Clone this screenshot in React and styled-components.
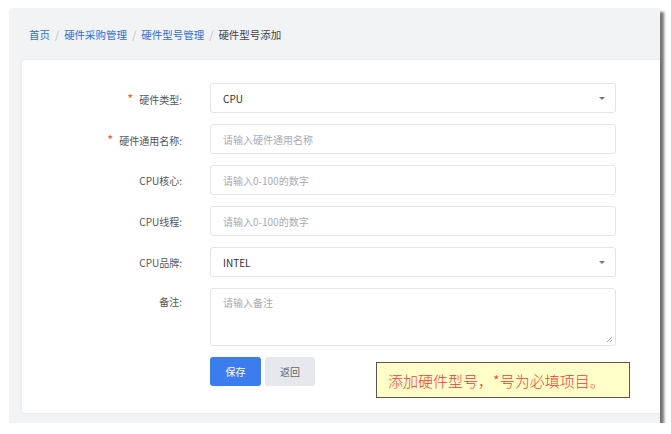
import React from "react";
import styled, { createGlobalStyle } from "styled-components";

const G = createGlobalStyle`
  body{margin:0;background:#fff;font-family:"Noto Sans CJK SC","Noto Sans",sans-serif;}
`;
const Frame = styled.div`
  position:relative;margin:8px 0 0 9px;width:651px;height:415px;background:#f2f3f5;
  border-radius:4px 0 0 0;box-shadow:4px 4px 3px rgba(0,0,0,.55);
`;
const Crumbs = styled.div`
  height:52px;display:flex;align-items:center;padding-left:20px;font-size:10.5px;color:#333;
`;
const Crumb = styled.span`color:${p=>p.$link?"#2f6fd6":"#444"};`;
const Sep = styled.span`color:#bbb;margin:0 5px;`;
const Card = styled.div`
  margin-left:13px;height:353px;background:#fff;border-radius:3px 0 0 3px;
  box-shadow:0 0 3px rgba(0,0,0,.08);padding-top:23px;box-sizing:border-box;
`;
const Row = styled.div`display:flex;align-items:${p=>p.$top?"flex-start":"center"};margin-bottom:11px;`;
const Label = styled.div`
  width:160px;text-align:right;font-size:10px;color:#555;padding-right:28px;
  padding-top:${p=>p.$top?"6px":"0"};
`;
const Star = styled.span`color:#f0642a;font-size:13px;margin-right:6px;`;
const Field = styled.div`
  width:406px;height:30px;box-sizing:border-box;border:1px solid #e2e4e8;border-radius:3px;
  display:flex;align-items:center;justify-content:space-between;padding:0 10px 0 12px;
  font-size:10px;color:${p=>p.$ph?"#a8abb2":"#333"};
`;
const Area = styled(Field)`height:58px;align-items:flex-start;padding-top:6px;position:relative;`;
const Caret = styled.span`width:0;height:0;border-left:3px solid transparent;border-right:3px solid transparent;border-top:3px solid #777;`;
const Grip = styled.svg`position:absolute;right:2px;bottom:2px;`;
const Buttons = styled.div`display:flex;gap:4px;padding-left:188px;margin-top:0;align-items:center;`;
const Btn = styled.div`
  width:${p=>p.$w}px;height:29px;border-radius:3px;display:flex;align-items:center;justify-content:center;
  font-size:10px;background:${p=>p.$primary?"#3b7ded":"#e6e8ec"};color:${p=>p.$primary?"#fff":"#666"};
`;
const Note = styled.div`
  position:absolute;left:367px;top:354px;width:254px;height:36px;box-sizing:border-box;
  background:#ffffc8;border:1px solid #555;color:#f03a3a;font-size:15px;font-weight:300;
  display:flex;align-items:center;padding-left:11px;
`;

export default function App(){
  return (<>
    <G/>
    <Frame>
      <Crumbs>
        <Crumb $link>首页</Crumb><Sep>/</Sep><Crumb $link>硬件采购管理</Crumb><Sep>/</Sep>
        <Crumb $link>硬件型号管理</Crumb><Sep>/</Sep><Crumb>硬件型号添加</Crumb>
      </Crumbs>
      <Card>
        <Row><Label><Star>*</Star>硬件类型:</Label><Field>CPU<Caret/></Field></Row>
        <Row><Label><Star>*</Star>硬件通用名称:</Label><Field $ph>请输入硬件通用名称</Field></Row>
        <Row><Label>CPU核心:</Label><Field $ph>请输入0-100的数字</Field></Row>
        <Row><Label>CPU线程:</Label><Field $ph>请输入0-100的数字</Field></Row>
        <Row><Label>CPU品牌:</Label><Field>INTEL<Caret/></Field></Row>
        <Row $top><Label $top>备注:</Label><Area $ph>请输入备注
          <Grip width="7" height="7" viewBox="0 0 7 7"><path d="M6 1L1 6M6 4L4 6" stroke="#888" strokeWidth="0.8"/></Grip></Area></Row>
        <Buttons><Btn $primary $w={51}>保存</Btn><Btn $w={50}>返回</Btn></Buttons>
      </Card>
      <Note>添加硬件型号，*号为必填项目。</Note>
    </Frame>
  </>);
}
